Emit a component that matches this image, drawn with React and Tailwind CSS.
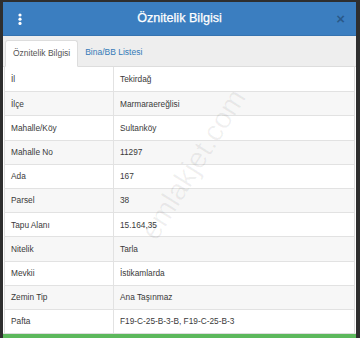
import React from "react";

const rows = [
  ["İl", "Tekirdağ"],
  ["İlçe", "Marmaraereğlisi"],
  ["Mahalle/Köy", "Sultanköy"],
  ["Mahalle No", "11297"],
  ["Ada", "167"],
  ["Parsel", "38"],
  ["Tapu Alanı", "15.164,35"],
  ["Nitelik", "Tarla"],
  ["Mevkii", "İstikamlarda"],
  ["Zemin Tip", "Ana Taşınmaz"],
  ["Pafta", "F19-C-25-B-3-B, F19-C-25-B-3"],
];

export default function App() {
  return (
    <div
      className="relative w-[360px] h-[338px] overflow-hidden bg-[#2e2e2e] pt-[2px] pl-[3px] pr-[4px] flex flex-col"
      style={{ fontFamily: '"Liberation Sans", Arial, sans-serif' }}
    >
      <div className="flex flex-col flex-1 bg-white px-[1px]">
        {/* Header */}
        <div className="relative -mx-[1px] h-[34px] shrink-0 bg-[#3b7ec0] border-b border-[#3573b0] flex items-center justify-center">
          <svg
            className="absolute left-[15px] top-[11px]"
            width="4"
            height="12"
            viewBox="0 0 4 12"
          >
            <circle cx="2" cy="2" r="1.6" fill="#fff" />
            <circle cx="2" cy="6.2" r="1.6" fill="#fff" />
            <circle cx="2" cy="10.4" r="1.6" fill="#fff" />
          </svg>
          <span className="text-white text-[12.6px] leading-none [-webkit-text-stroke:0.25px_#fff]">Öznitelik Bilgisi</span>
          <span className="absolute right-[11px] top-[9px] text-[15px] font-bold leading-none text-[rgba(0,0,0,0.3)]">
            ×
          </span>
        </div>
        {/* Tabs */}
        <div className="-mx-[1px] h-[31px] shrink-0 bg-[#eeeeee] border-b border-[#dddddd] flex items-end pl-[2px] text-[8.5px]">
          <div className="h-[27px] -mb-[1px] bg-white border border-[#dddddd] border-b-white rounded-t-[3px] px-[7px] flex items-center text-[#555]">
            Öznitelik Bilgisi
          </div>
          <div className="h-[27px] px-[7px] flex items-center text-[#337ab7]">Bina/BB Listesi</div>
        </div>
        {/* Table */}
        <div className="flex flex-col border-x border-[#dddddd] text-[8.3px] text-[#3a3a3a]">
          {rows.map(([k, v], i) => (
            <div
              key={k}
              className={
                "h-[24.2px] grid grid-cols-[109px_1fr] border-t border-[#e2e2e2] first:border-t-0 " +
                (i % 2 === 1 ? "bg-[#f7f7f7]" : "bg-white")
              }
            >
              <div className="pl-[6px] flex items-center border-r border-[#e2e2e2]">{k}</div>
              <div className="pl-[6px] flex items-center">{v}</div>
            </div>
          ))}
        </div>
        <div className="-mx-[1px] flex-1 bg-[#5cb85c] border-t border-[#dddddd]"></div>
      </div>
      {/* watermark */}
      <div
        className="absolute left-[108px] top-[150px] text-[29px] leading-none text-[rgba(0,0,0,0.06)] pointer-events-none whitespace-nowrap"
        style={{ transform: "rotate(-58deg)", transformOrigin: "center" }}
      >
        emlakjet.com
      </div>
    </div>
  );
}
